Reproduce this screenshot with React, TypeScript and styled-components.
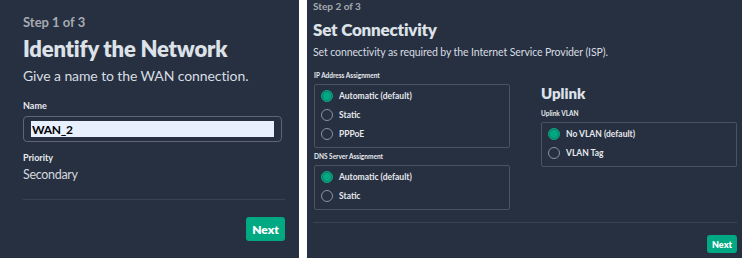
import React from 'react';
import styled, { createGlobalStyle } from 'styled-components';

const GlobalStyle = createGlobalStyle`
  html, body {
    margin: 0;
    padding: 0;
    background: #ffffff;
  }
  body {
    font-family: Lato, "Noto Sans", sans-serif;
  }
`;

const Page = styled.div`
  display: flex;
  gap: 8px;
  width: 744px;
  height: 258px;
  background: #ffffff;
`;

const Panel = styled.div<{ $compact?: boolean }>`
  box-sizing: border-box;
  height: 100%;
  background: #263040;
  color: #e6e8ec;
  display: flex;
  flex-direction: column;
  ${(p) =>
    p.$compact
      ? `
    flex: 1;
    margin-right: 2px;
    padding: 0 5px 0 6px;
  `
      : `
    width: 299px;
    padding: 13px 14px 0 23px;
  `}
`;

const Step = styled.div<{ $compact?: boolean }>`
  font-weight: 700;
  color: #a6abb3;
  font-size: ${(p) => (p.$compact ? '10px' : '13px')};
  line-height: ${(p) => (p.$compact ? '12px' : '18px')};
`;

const Title = styled.h1<{ $compact?: boolean }>`
  margin: ${(p) => (p.$compact ? '7px 0 0' : '4px 0 0')};
  font-weight: 800;
  color: #dde1e8;
  font-size: ${(p) => (p.$compact ? '17px' : '22px')};
  line-height: ${(p) => (p.$compact ? '22px' : '28px')};
  letter-spacing: -0.2px;
`;

const Description = styled.p<{ $compact?: boolean }>`
  margin: 4px 0 0;
  color: #d8dce3;
  font-size: ${(p) => (p.$compact ? '10.5px' : '14px')};
  line-height: ${(p) => (p.$compact ? '14px' : '18px')};
  letter-spacing: -0.1px;
`;

const FieldLabel = styled.div<{ $compact?: boolean }>`
  font-weight: 700;
  color: #e8eaee;
  font-size: ${(p) => (p.$compact ? '6.5px' : '9px')};
  line-height: 10px;
`;

const InputFrame = styled.div`
  box-sizing: border-box;
  margin-top: 5px;
  width: 259px;
  height: 26px;
  border: 1px solid #5f6672;
  border-radius: 4px;
  padding: 4px 7px 4px 7px;
  display: flex;
`;

const TextInput = styled.input`
  box-sizing: border-box;
  flex: 1;
  height: 16px;
  border: none;
  outline: none;
  padding: 0 1px;
  background: #e8f0fe;
  color: #000000;
  font-family: Lato, "Noto Sans", sans-serif;
  font-weight: 700;
  font-size: 12px;
  letter-spacing: -0.3px;
`;

const ReadValue = styled.div`
  margin-top: 3px;
  font-size: 12.5px;
  line-height: 18px;
  color: #d3d7de;
  letter-spacing: -0.3px;
`;

const Divider = styled.div`
  height: 1px;
  background: #3a4352;
`;

const Footer = styled.div<{ $compact?: boolean }>`
  display: flex;
  justify-content: flex-end;
  padding-top: ${(p) => (p.$compact ? '12px' : '17px')};
`;

const NextButton = styled.button<{ $compact?: boolean }>`
  border: none;
  border-radius: 3px;
  background: #01a982;
  color: #ffffff;
  font-family: Lato, "Noto Sans", sans-serif;
  font-weight: 800;
  padding: 0;
  width: ${(p) => (p.$compact ? '30px' : '39px')};
  height: ${(p) => (p.$compact ? '18px' : '24px')};
  font-size: ${(p) => (p.$compact ? '9px' : '12px')};
`;

const Columns = styled.div`
  display: grid;
  grid-template-columns: 196px 196px;
  column-gap: 31px;
  padding-left: 1px;
  margin-top: 12px;
`;

const Column = styled.div`
  display: flex;
  flex-direction: column;
`;

const SubHeading = styled.h2`
  margin: 0;
  font-size: 15px;
  line-height: 20px;
  font-weight: 800;
  color: #dde1e8;
`;

const OptionBox = styled.div`
  box-sizing: border-box;
  margin-top: 3px;
  border: 1px solid #4b5362;
  border-radius: 2px;
  padding: 5px 6px 7px;
  display: flex;
  flex-direction: column;
  gap: 7px;
`;

const OptionRow = styled.label`
  display: flex;
  align-items: center;
  gap: 6px;
  height: 12px;
  font-size: 8.5px;
  font-weight: 700;
  color: #e6e8ec;
`;

const RadioDot = styled.span<{ $checked?: boolean }>`
  box-sizing: border-box;
  width: 12px;
  height: 12px;
  border-radius: 50%;
  flex: none;
  border: 1px solid ${(p) => (p.$checked ? '#01a982' : '#8c929c')};
  background: ${(p) => (p.$checked ? '#01a982' : 'transparent')};
  box-shadow: ${(p) => (p.$checked ? 'inset 0 0 0 1px #1f6f5e' : 'none')};
`;

const Spacer = styled.div<{ $h: number }>`
  height: ${(p) => p.$h}px;
  flex: none;
`;

type RadioGroupProps = {
  label: string;
  options: string[];
  selected: number;
};

const RadioGroup = ({ label, options, selected }: RadioGroupProps) => (
  <div>
    <FieldLabel $compact>{label}</FieldLabel>
    <OptionBox>
      {options.map((opt, i) => (
        <OptionRow key={opt}>
          <RadioDot $checked={i === selected} />
          {opt}
        </OptionRow>
      ))}
    </OptionBox>
  </div>
);

const IdentifyPanel = () => (
  <Panel>
    <Step>Step 1 of 3</Step>
    <Title>Identify the Network</Title>
    <Description>Give a name to the WAN connection.</Description>
    <Spacer $h={16} />
    <FieldLabel>Name</FieldLabel>
    <InputFrame>
      <TextInput defaultValue="WAN_2" />
    </InputFrame>
    <Spacer $h={11} />
    <FieldLabel>Priority</FieldLabel>
    <ReadValue>Secondary</ReadValue>
    <Spacer $h={15} />
    <Divider />
    <Footer>
      <NextButton>Next</NextButton>
    </Footer>
  </Panel>
);

const ConnectivityPanel = () => (
  <Panel $compact>
    <Step $compact>Step 2 of 3</Step>
    <Title $compact>Set Connectivity</Title>
    <Description $compact>
      Set connectivity as required by the Internet Service Provider (ISP).
    </Description>
    <Columns>
      <Column>
        <RadioGroup
          label="IP Address Assignment"
          options={['Automatic (default)', 'Static', 'PPPoE']}
          selected={0}
        />
        <Spacer $h={4} />
        <RadioGroup
          label="DNS Server Assignment"
          options={['Automatic (default)', 'Static']}
          selected={0}
        />
      </Column>
      <Column>
        <Spacer $h={12} />
        <SubHeading>Uplink</SubHeading>
        <Spacer $h={6} />
        <RadioGroup
          label="Uplink VLAN"
          options={['No VLAN (default)', 'VLAN Tag']}
          selected={0}
        />
      </Column>
    </Columns>
    <Spacer $h={12} />
    <Divider />
    <Footer $compact>
      <NextButton $compact>Next</NextButton>
    </Footer>
  </Panel>
);

export default function App() {
  return (
    <>
      <GlobalStyle />
      <Page>
        <IdentifyPanel />
        <ConnectivityPanel />
      </Page>
    </>
  );
}
